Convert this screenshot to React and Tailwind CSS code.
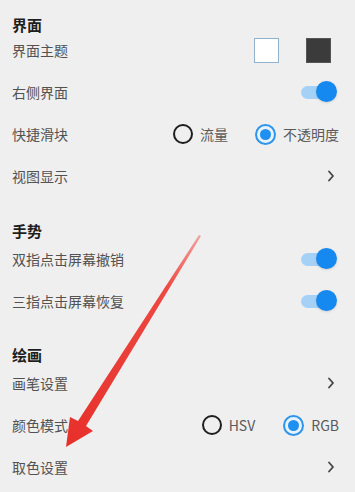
import { useState } from "react";

const font = { fontFamily: '"Noto Sans CJK SC", "Noto Sans", sans-serif' };

function Toggle({ on }) {
  return (
    <div className="relative w-[36px] h-[22px] flex items-center">
      <div className={`w-[30px] h-[13px] rounded-full ${on ? "bg-[#a6d1f6]" : "bg-gray-300"}`} />
      <div
        className={`absolute top-0 w-[21px] h-[21px] rounded-full shadow-sm ${
          on ? "right-0 bg-[#1589ef]" : "left-0 bg-white"
        }`}
      />
    </div>
  );
}

function Radio({ checked, label }) {
  return (
    <div className="flex items-center gap-[7px]">
      {checked ? (
        <div className="w-[21px] h-[21px] rounded-full border-[2.5px] border-[#2f95ea] bg-[#e6f2fc] flex items-center justify-center">
          <div className="w-[11px] h-[11px] rounded-full bg-[#1f8ff0]" />
        </div>
      ) : (
        <div className="w-[20px] h-[20px] rounded-full border-[2.5px] border-[#1e1e1e]" />
      )}
      <span className="text-[14px] text-[#5a5a5a]">{label}</span>
    </div>
  );
}

function Chevron() {
  return (
    <svg width="8" height="12" viewBox="0 0 8 12" className="-mr-[2px]">
      <polyline points="2,1.5 6,6 2,10.5" fill="none" stroke="#444" strokeWidth="1.8" strokeLinecap="round" strokeLinejoin="round" />
    </svg>
  );
}

function Row({ label, children }) {
  return (
    <div className="h-[42px] flex items-center justify-between pl-3 pr-[22px]">
      <span className="text-[14px] text-[#525252]">{label}</span>
      {children}
    </div>
  );
}

function Header({ title, className }) {
  return (
    <div className={`pl-3 ${className}`}>
      <span className="text-[15px] leading-[20px] font-bold text-[#1e1e1e]">{title}</span>
    </div>
  );
}

export default function App() {
  const [theme] = useState("light");

  return (
    <div className="relative w-[355px] h-[492px] overflow-hidden bg-[#efefef]" style={font}>
      {/* 界面 */}
      <Header title="界面" className="h-[29px] pt-[12px]" />
      <Row label="界面主题">
        <div className="flex items-center gap-[27px] mr-[2px]">
          <div className="w-[25px] h-[25px] bg-white border border-[#8fb3cc]" />
          <div className="w-[25px] h-[25px] bg-[#3b3b3b] border border-[#555]" />
        </div>
      </Row>
      <Row label="右侧界面">
        <div className="-mr-[4px]">
          <Toggle on />
        </div>
      </Row>
      <Row label="快捷滑块">
        <div className="flex items-center gap-[27px] -mr-[6px]">
          <Radio label="流量" />
          <Radio checked label="不透明度" />
        </div>
      </Row>
      <Row label="视图显示">
        <Chevron />
      </Row>

      {/* 手势 */}
      <Header title="手势" className="h-[41px] pt-[21px]" />
      <Row label="双指点击屏幕撤销">
        <div className="-mr-[4px]">
          <Toggle on />
        </div>
      </Row>
      <Row label="三指点击屏幕恢复">
        <div className="-mr-[4px]">
          <Toggle on />
        </div>
      </Row>

      {/* 绘画 */}
      <Header title="绘画" className="h-[40px] pt-[20px]" />
      <Row label="画笔设置">
        <Chevron />
      </Row>
      <Row label="颜色模式">
        <div className="flex items-center gap-[28px] -mr-[6px]">
          <Radio label="HSV" />
          <Radio checked label="RGB" />
        </div>
      </Row>
      <Row label="取色设置">
        <Chevron />
      </Row>

      {/* annotation arrow */}
      <svg className="absolute inset-0 pointer-events-none" width="355" height="492" viewBox="0 0 355 492">
        <defs>
          <linearGradient id="arr" x1="200" y1="237" x2="70" y2="440" gradientUnits="userSpaceOnUse">
            <stop offset="0" stopColor="#f3a09c" />
            <stop offset="0.25" stopColor="#ec4a42" />
            <stop offset="1" stopColor="#e8302b" />
          </linearGradient>
        </defs>
        <polygon
          points="201,236 86,426 93,431 66,447 70,417 78,421 199,235"
          fill="url(#arr)"
        />
      </svg>
    </div>
  );
}
